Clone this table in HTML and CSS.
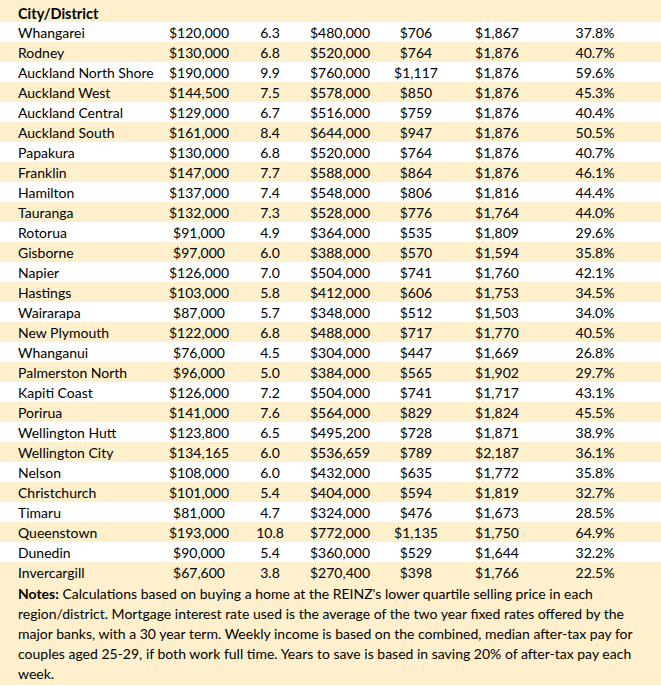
FILE: index.html
```html
<!DOCTYPE html>
<html>
<head>
<meta charset="utf-8">
<link rel="stylesheet" href="styles.css">
</head>
<body>
<div class="sheet">
<table class="data">
<colgroup>
<col class="c1"><col class="c2"><col class="c3"><col class="c4"><col class="c5"><col class="c6"><col class="c7">
</colgroup>
<thead>
<tr class="head"><th>City/District</th><th></th><th></th><th></th><th></th><th></th><th></th></tr>
</thead>
<tbody>
<tr><td>Whangarei</td><td>$120,000</td><td>6.3</td><td>$480,000</td><td>$706</td><td>$1,867</td><td>37.8%</td></tr>
<tr><td>Rodney</td><td>$130,000</td><td>6.8</td><td>$520,000</td><td>$764</td><td>$1,876</td><td>40.7%</td></tr>
<tr><td>Auckland North Shore</td><td>$190,000</td><td>9.9</td><td>$760,000</td><td>$1,117</td><td>$1,876</td><td>59.6%</td></tr>
<tr><td>Auckland West</td><td>$144,500</td><td>7.5</td><td>$578,000</td><td>$850</td><td>$1,876</td><td>45.3%</td></tr>
<tr><td>Auckland Central</td><td>$129,000</td><td>6.7</td><td>$516,000</td><td>$759</td><td>$1,876</td><td>40.4%</td></tr>
<tr><td>Auckland South</td><td>$161,000</td><td>8.4</td><td>$644,000</td><td>$947</td><td>$1,876</td><td>50.5%</td></tr>
<tr><td>Papakura</td><td>$130,000</td><td>6.8</td><td>$520,000</td><td>$764</td><td>$1,876</td><td>40.7%</td></tr>
<tr><td>Franklin</td><td>$147,000</td><td>7.7</td><td>$588,000</td><td>$864</td><td>$1,876</td><td>46.1%</td></tr>
<tr><td>Hamilton</td><td>$137,000</td><td>7.4</td><td>$548,000</td><td>$806</td><td>$1,816</td><td>44.4%</td></tr>
<tr><td>Tauranga</td><td>$132,000</td><td>7.3</td><td>$528,000</td><td>$776</td><td>$1,764</td><td>44.0%</td></tr>
<tr><td>Rotorua</td><td>$91,000</td><td>4.9</td><td>$364,000</td><td>$535</td><td>$1,809</td><td>29.6%</td></tr>
<tr><td>Gisborne</td><td>$97,000</td><td>6.0</td><td>$388,000</td><td>$570</td><td>$1,594</td><td>35.8%</td></tr>
<tr><td>Napier</td><td>$126,000</td><td>7.0</td><td>$504,000</td><td>$741</td><td>$1,760</td><td>42.1%</td></tr>
<tr><td>Hastings</td><td>$103,000</td><td>5.8</td><td>$412,000</td><td>$606</td><td>$1,753</td><td>34.5%</td></tr>
<tr><td>Wairarapa</td><td>$87,000</td><td>5.7</td><td>$348,000</td><td>$512</td><td>$1,503</td><td>34.0%</td></tr>
<tr><td>New Plymouth</td><td>$122,000</td><td>6.8</td><td>$488,000</td><td>$717</td><td>$1,770</td><td>40.5%</td></tr>
<tr><td>Whanganui</td><td>$76,000</td><td>4.5</td><td>$304,000</td><td>$447</td><td>$1,669</td><td>26.8%</td></tr>
<tr><td>Palmerston North</td><td>$96,000</td><td>5.0</td><td>$384,000</td><td>$565</td><td>$1,902</td><td>29.7%</td></tr>
<tr><td>Kapiti Coast</td><td>$126,000</td><td>7.2</td><td>$504,000</td><td>$741</td><td>$1,717</td><td>43.1%</td></tr>
<tr><td>Porirua</td><td>$141,000</td><td>7.6</td><td>$564,000</td><td>$829</td><td>$1,824</td><td>45.5%</td></tr>
<tr><td>Wellington Hutt</td><td>$123,800</td><td>6.5</td><td>$495,200</td><td>$728</td><td>$1,871</td><td>38.9%</td></tr>
<tr><td>Wellington City</td><td>$134,165</td><td>6.0</td><td>$536,659</td><td>$789</td><td>$2,187</td><td>36.1%</td></tr>
<tr><td>Nelson</td><td>$108,000</td><td>6.0</td><td>$432,000</td><td>$635</td><td>$1,772</td><td>35.8%</td></tr>
<tr><td>Christchurch</td><td>$101,000</td><td>5.4</td><td>$404,000</td><td>$594</td><td>$1,819</td><td>32.7%</td></tr>
<tr><td>Timaru</td><td>$81,000</td><td>4.7</td><td>$324,000</td><td>$476</td><td>$1,673</td><td>28.5%</td></tr>
<tr><td>Queenstown</td><td>$193,000</td><td>10.8</td><td>$772,000</td><td>$1,135</td><td>$1,750</td><td>64.9%</td></tr>
<tr><td>Dunedin</td><td>$90,000</td><td>5.4</td><td>$360,000</td><td>$529</td><td>$1,644</td><td>32.2%</td></tr>
<tr><td>Invercargill</td><td>$67,600</td><td>3.8</td><td>$270,400</td><td>$398</td><td>$1,766</td><td>22.5%</td></tr>
</tbody>
</table>
<p class="notes"><b>Notes:</b> Calculations based on buying a home at the REINZ's lower quartile selling price in each region/district. Mortgage interest rate used is the average of the two year fixed rates offered by the major banks, with a 30 year term. Weekly income is based on the combined, median after-tax pay for couples aged 25-29, if both work full time. Years to save is based in saving 20% of after-tax pay each week.</p>
</div>
</body>
</html>
```

FILE: styles.css
```css
html, body {
  margin: 0;
  padding: 0;
  background: #ffffff;
}
body {
  font-family: Lato, "Open Sans", "Liberation Sans", sans-serif;
  font-size: 14px;
  color: #000000;
}
.sheet {
  width: 661px;
  background: #fff0cd;
}
.data {
  width: 661px;
  border-collapse: collapse;
  table-layout: fixed;
}
.c1 { width: 160px; }
.c2 { width: 78px; }
.c3 { width: 64px; }
.c4 { width: 76px; }
.c5 { width: 76px; }
.c6 { width: 86px; }
.c7 { width: 121px; }
.data th, .data td {
  padding: 1px 0 0 0;
  height: 19px;
  line-height: 19px;
  text-align: center;
  white-space: nowrap;
  vertical-align: top;
}
.data th:first-child, .data td:first-child {
  text-align: left;
  padding-left: 18px;
}
.data td:last-child, .data th:last-child {
  padding-right: 11px;
}
.head th {
  padding-top: 6px;
  height: 16px;
  line-height: 16px;
  font-weight: bold;
  font-size: 14.5px;
}
.data tbody tr:nth-child(odd) {
  background: #ffffff;
}
.data tbody tr:nth-child(even) {
  background: #fff0cd;
}
.notes {
  margin: 0;
  padding: 2px 12px 1px 18px;
  line-height: 20px;
}
```
